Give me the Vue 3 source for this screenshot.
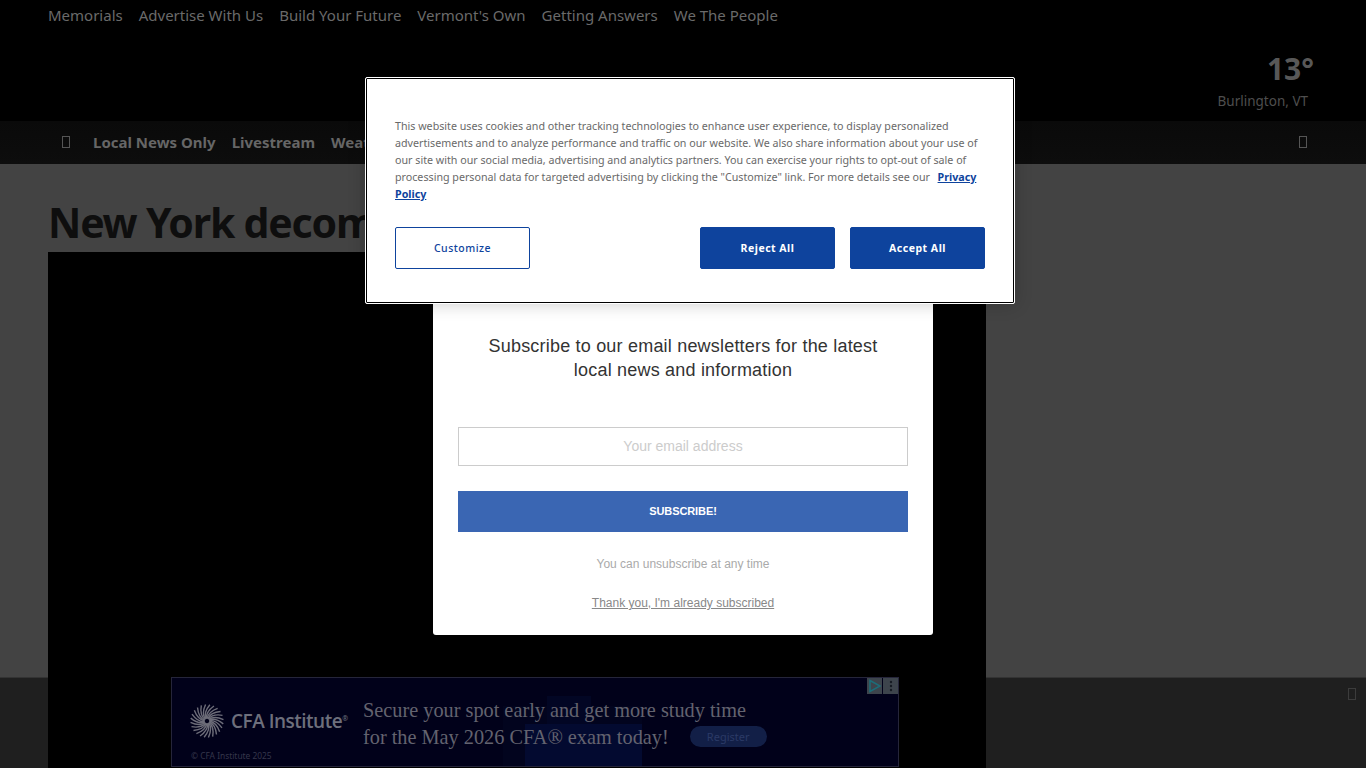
<template>
  <div class="page">
    <div class="topnav">
      <a v-for="link in topLinks" :key="link">{{ link }}</a>
    </div>

    <header class="masthead">
      <div class="weather">
        <div class="temp">13°</div>
        <div class="city">Burlington, VT</div>
      </div>
    </header>

    <nav class="mainnav">
      <span class="tofu menu"></span>
      <a v-for="link in navLinks" :key="link">{{ link }}</a>
      <span class="tofu search"></span>
    </nav>

    <main class="content">
      <h1>New York decommissions</h1>
      <div class="video"></div>
    </main>

    <div class="sticky-bar">
      <span class="tofu close"></span>
    </div>

    <div class="ad">
      <div class="ad-glow wide"></div>
      <div class="ad-glow upper"></div>
      <div class="ad-glow"></div>
      <div class="ad-chips">
        <span class="chip">
          <svg width="14" height="14" viewBox="0 0 14 14"><path d="M2 1.5 L12 7 L2 12.5 Z" fill="none" stroke="#1c6d78" stroke-width="1.5" /></svg>
        </span>
        <span class="chip">
          <svg width="14" height="14" viewBox="0 0 14 14"><circle cx="7" cy="3" r="1.2" fill="#161b22" /><circle cx="7" cy="7" r="1.2" fill="#161b22" /><circle cx="7" cy="11" r="1.2" fill="#161b22" /></svg>
        </span>
      </div>
      <div class="ad-brand">
        <div class="ad-logo">
          <svg width="34" height="34" viewBox="0 0 36 36">
            <path
              v-for="s in spokes"
              :key="s.id"
              :d="s.d"
              fill="none"
              stroke="#6d6d79"
              stroke-width="1.5"
            />
          </svg>
          <span class="ad-name">CFA Institute<sup>®</sup></span>
        </div>
        <div class="ad-copy">© CFA Institute 2025</div>
      </div>
      <div class="ad-headline">
        <div>Secure your spot early and get more study time</div>
        <div class="ad-line">for the May 2026 CFA® exam today!<span class="ad-btn">Register</span></div>
      </div>
    </div>

    <section class="signup">
      <p class="signup-title">Subscribe to our email newsletters for the latest<br />local news and information</p>
      <div class="signup-input">Your email address</div>
      <button class="signup-btn">SUBSCRIBE!</button>
      <p class="signup-note">You can unsubscribe at any time</p>
      <a class="signup-skip">Thank you, I'm already subscribed</a>
    </section>

    <section class="cookie">
      <p class="cookie-text">
        This website uses cookies and other tracking technologies to enhance user experience, to display personalized advertisements and to analyze performance and traffic on our website. We also share information about your use of our site with our social media, advertising and analytics partners. You can exercise your rights to opt-out of sale of processing personal data for targeted advertising by clicking the "Customize" link. For more details see our&nbsp; <a>Privacy Policy</a>
      </p>
      <div class="cookie-actions">
        <button class="cookie-btn outline">Customize</button>
        <div class="cookie-right">
          <button class="cookie-btn">Reject All</button>
          <button class="cookie-btn">Accept All</button>
        </div>
      </div>
    </section>
  </div>
</template>

<script setup>
const topLinks = ['Memorials', 'Advertise With Us', 'Build Your Future', "Vermont's Own", 'Getting Answers', 'We The People']
const navLinks = ['Local News Only', 'Livestream', 'Weather']

// pinwheel of the CFA mark: eight bundles of bent strands
const spokes = []
for (let i = 0; i < 8; i++) {
  const a = (i / 8) * Math.PI * 2
  for (let j = 0; j < 3; j++) {
    const start = a + j * 0.26
    const end = start + 0.7
    const mid = start + 0.15
    const pt = (r, t) => (18 + r * Math.cos(t)).toFixed(2) + ' ' + (18 + r * Math.sin(t)).toFixed(2)
    spokes.push({
      id: i + '-' + j,
      d: 'M' + pt(2.5, start) + ' Q' + pt(10, mid) + ' ' + pt(17.5, end)
    })
  }
}
</script>

<style>
html, body {
  margin: 0;
  background: #434343;
  overflow: hidden;
}
</style>

<style scoped>
.page {
  position: relative;
  width: 1366px;
  height: 768px;
  overflow: hidden;
  background: #434343;
  font-family: "Noto Sans", "Open Sans", sans-serif;
}

.topnav {
  display: flex;
  gap: 16px;
  box-sizing: border-box;
  height: 32px;
  padding-left: 48px;
  background: #000;
  color: #6a6a6a;
  font-size: 15px;
  line-height: 31px;
}

.masthead {
  display: flex;
  justify-content: flex-end;
  height: 89px;
  padding-right: 52px;
  background: #000;
}

.weather {
  text-align: right;
  padding-top: 17px;
}

.temp {
  color: #585858;
  font-size: 30px;
  font-weight: 700;
  line-height: 40px;
}

.city {
  margin-right: 6px;
  margin-top: 3px;
  color: #4e4e4e;
  font-size: 13.5px;
  line-height: 18px;
}

.mainnav {
  display: flex;
  align-items: center;
  gap: 16px;
  box-sizing: border-box;
  height: 43px;
  padding: 0 59px 2px 62px;
  background: linear-gradient(#0a0a0a, #0d0d0d);
  color: #666;
  font-size: 15px;
  font-weight: 700;
}

.tofu {
  display: block;
  box-sizing: border-box;
  width: 8px;
  height: 12px;
  border: 1px solid #555;
}

.menu {
  margin-right: 7px;
}

.search {
  margin-left: auto;
}

.content {
  padding: 28px 380px 0 48px;
}

h1 {
  margin: 0;
  color: #0e0e0e;
  font-size: 41px;
  font-weight: 700;
  line-height: 60px;
  letter-spacing: -1.2px;
  white-space: nowrap;
}

.video {
  position: relative;
  z-index: 2;
  height: 520px;
  background: #000;
}

.sticky-bar {
  position: absolute;
  left: 0;
  right: 0;
  bottom: 0;
  z-index: 1;
  height: 90px;
  background: #1f1f1f;
  border-top: 1px solid #333;
}

.close {
  position: absolute;
  top: 10px;
  right: 10px;
  border-color: #3c3c3c;
}

.ad {
  position: absolute;
  left: 171px;
  top: 677px;
  z-index: 3;
  box-sizing: border-box;
  width: 728px;
  height: 90px;
  border: 1px solid #25253a;
  background: #01011a;
  overflow: hidden;
}

.ad-glow {
  position: absolute;
  left: 353px;
  bottom: 0;
  width: 117px;
  height: 42px;
  background: #030a30;
}

.ad-glow.upper {
  left: 375px;
  width: 44px;
  height: 70px;
  background: #020624;
}

.ad-glow.wide {
  left: 331px;
  width: 139px;
  height: 60px;
  background: #02041e;
}

.ad-chips {
  position: absolute;
  top: 0;
  right: 0;
  display: flex;
  gap: 1px;
}

.chip {
  display: flex;
  align-items: center;
  justify-content: center;
  width: 15px;
  height: 16px;
  background: #3d444c;
}

.ad-brand {
  position: absolute;
  left: 18px;
  top: 26px;
}

.ad-logo {
  display: flex;
  align-items: center;
  gap: 7px;
}

.ad-name {
  color: #6d6f7c;
  font-family: "Open Sans", sans-serif;
  font-size: 19px;
  font-weight: 600;
  letter-spacing: -0.5px;
}

.ad-name sup {
  font-size: 7px;
}

.ad-copy {
  margin-top: 12px;
  margin-left: 1px;
  color: #35364a;
  font-size: 8.4px;
}

.ad-headline {
  position: absolute;
  left: 191px;
  top: 19px;
  color: #63636f;
  font-family: "Liberation Serif", serif;
  font-size: 20.3px;
  line-height: 27px;
  white-space: nowrap;
}

.ad-btn {
  display: inline-block;
  margin-left: 21px;
  width: 77px;
  height: 21px;
  border-radius: 11px;
  background: #121f47;
  color: #2b3a66;
  font-family: "Noto Sans", sans-serif;
  font-size: 11px;
  line-height: 21px;
  text-align: center;
  vertical-align: 3px;
}

.signup {
  position: absolute;
  left: 433px;
  top: 290px;
  z-index: 4;
  box-sizing: border-box;
  width: 500px;
  height: 345px;
  padding: 44px 25px 0;
  border-radius: 0 0 3px 3px;
  background: #fff;
  font-family: "Liberation Sans", Arial, sans-serif;
  text-align: center;
}

.signup-title {
  margin: 0;
  color: #333;
  font-size: 18px;
  line-height: 24px;
  letter-spacing: 0.2px;
}

.signup-input {
  box-sizing: border-box;
  height: 39px;
  margin-top: 45px;
  border: 1px solid #ccc;
  color: #ccc;
  font-size: 14px;
  line-height: 37px;
}

.signup-btn {
  display: block;
  width: 450px;
  height: 41px;
  margin-top: 25px;
  padding: 0 0 2px;
  border: 0;
  background: #3a66b3;
  color: #fff;
  font-family: inherit;
  font-size: 11px;
  font-weight: 700;
  letter-spacing: -0.1px;
}

.signup-note {
  margin: 25px 0 0;
  color: #aaa;
  font-size: 12px;
  line-height: 14px;
}

.signup-skip {
  display: inline-block;
  margin-top: 25px;
  color: #888;
  font-size: 12px;
  line-height: 14px;
  text-decoration: underline;
}

.cookie {
  position: absolute;
  left: 365px;
  top: 77px;
  z-index: 5;
  box-sizing: border-box;
  width: 650px;
  height: 227px;
  padding: 40px 29px 0;
  border: 1px solid #fff;
  border-radius: 2px;
  background: #fff;
  box-shadow: inset 0 0 0 1px #000, 0 0 18px rgba(0, 0, 0, 0.2);
}

.cookie-text {
  margin: 0;
  color: #696969;
  font-size: 10.7px;
  line-height: 17px;
}

.cookie-text a {
  margin-left: 2px;
  color: #0e439d;
  font-weight: 700;
  text-decoration: underline;
}

.cookie-actions {
  display: flex;
  justify-content: space-between;
  margin-top: 24px;
}

.cookie-right {
  display: flex;
  gap: 15px;
}

.cookie-btn {
  box-sizing: border-box;
  width: 135px;
  height: 42px;
  border: 1px solid #0e439d;
  border-radius: 2px;
  background: #0e439d;
  color: #fff;
  font-family: inherit;
  font-size: 10.5px;
  font-weight: 700;
  letter-spacing: 0.5px;
}

.cookie-btn.outline {
  background: #fff;
  color: #0e439d;
  font-weight: 500;
}
</style>
